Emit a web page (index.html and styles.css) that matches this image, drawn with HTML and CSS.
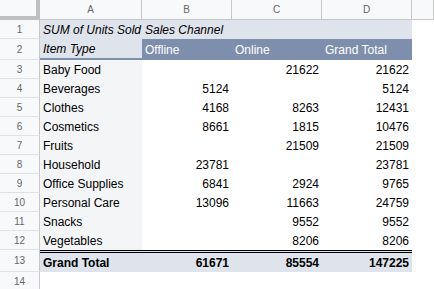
FILE: index.html
```html
<!DOCTYPE html>
<html lang="en">
<head>
    <meta charset="UTF-8">
    <title>Pivot table</title>
    <link rel="stylesheet" href="styles.css">
</head>
<body>
    <div class="sheet">
        <!-- column headers -->
        <div class="corner"></div>
        <div class="col-head">A</div>
        <div class="col-head">B</div>
        <div class="col-head">C</div>
        <div class="col-head">D</div>
        <div class="col-head"></div>

        <!-- row 1 -->
        <div class="row-head">1</div>
        <div class="cell pv-light italic">SUM of Units Sold</div>
        <div class="cell pv-light italic">Sales Channel</div>
        <div class="cell pv-light"></div>
        <div class="cell pv-light"></div>
        <div class="cell"></div>

        <!-- row 2 -->
        <div class="row-head">2</div>
        <div class="cell pv-light italic label-head">Item Type</div>
        <div class="cell pv-dark">Offline</div>
        <div class="cell pv-dark">Online</div>
        <div class="cell pv-dark">Grand Total</div>
        <div class="cell"></div>

        <div class="row-head">3</div>
        <div class="cell label">Baby Food</div>
        <div class="cell num"></div>
        <div class="cell num">21622</div>
        <div class="cell num">21622</div>
        <div class="cell"></div>

        <div class="row-head">4</div>
        <div class="cell label">Beverages</div>
        <div class="cell num">5124</div>
        <div class="cell num"></div>
        <div class="cell num">5124</div>
        <div class="cell"></div>

        <div class="row-head">5</div>
        <div class="cell label">Clothes</div>
        <div class="cell num">4168</div>
        <div class="cell num">8263</div>
        <div class="cell num">12431</div>
        <div class="cell"></div>

        <div class="row-head">6</div>
        <div class="cell label">Cosmetics</div>
        <div class="cell num">8661</div>
        <div class="cell num">1815</div>
        <div class="cell num">10476</div>
        <div class="cell"></div>

        <div class="row-head">7</div>
        <div class="cell label">Fruits</div>
        <div class="cell num"></div>
        <div class="cell num">21509</div>
        <div class="cell num">21509</div>
        <div class="cell"></div>

        <div class="row-head">8</div>
        <div class="cell label">Household</div>
        <div class="cell num">23781</div>
        <div class="cell num"></div>
        <div class="cell num">23781</div>
        <div class="cell"></div>

        <div class="row-head">9</div>
        <div class="cell label">Office Supplies</div>
        <div class="cell num">6841</div>
        <div class="cell num">2924</div>
        <div class="cell num">9765</div>
        <div class="cell"></div>

        <div class="row-head">10</div>
        <div class="cell label">Personal Care</div>
        <div class="cell num">13096</div>
        <div class="cell num">11663</div>
        <div class="cell num">24759</div>
        <div class="cell"></div>

        <div class="row-head">11</div>
        <div class="cell label">Snacks</div>
        <div class="cell num"></div>
        <div class="cell num">9552</div>
        <div class="cell num">9552</div>
        <div class="cell"></div>

        <div class="row-head">12</div>
        <div class="cell label">Vegetables</div>
        <div class="cell num"></div>
        <div class="cell num">8206</div>
        <div class="cell num">8206</div>
        <div class="cell"></div>

        <!-- grand total -->
        <div class="row-head">13</div>
        <div class="cell total">Grand Total</div>
        <div class="cell total num">61671</div>
        <div class="cell total num">85554</div>
        <div class="cell total num">147225</div>
        <div class="cell"></div>

        <div class="row-head">14</div>
        <div class="cell"></div>
        <div class="cell"></div>
        <div class="cell"></div>
        <div class="cell"></div>
        <div class="cell"></div>
    </div>
</body>
</html>
```

FILE: styles.css
```css
html, body {
    margin: 0;
    padding: 0;
    background: #fff;
    overflow: hidden;
}
.sheet {
    display: grid;
    grid-template-columns: 40px 102px 90px 90px 90px 22px;
    grid-template-rows: 20px 19px 21px repeat(10, 19px) 22px 19px;
    font-family: "Liberation Sans", Arial, sans-serif;
    font-size: 12px;
    color: #000;
}
.sheet > div {
    box-sizing: border-box;
    overflow: hidden;
    white-space: nowrap;
}
.corner {
    background: #f8f9fa;
    border-right: 4px solid #c0c0c0;
    border-bottom: 4px solid #c0c0c0;
}
.col-head,
.row-head {
    background: #f8f9fa;
    border-right: 1px solid #c7c7c7;
    color: #666;
    font-size: 10px;
    display: flex;
    align-items: center;
    justify-content: center;
}
.col-head {
    border-bottom: 1px solid #c7c7c7;
}
.row-head {
    border-bottom: 1px solid #e1e1e1;
}
.cell {
    display: flex;
    align-items: center;
    padding: 0 3px;
}
.num {
    justify-content: flex-end;
}
.italic {
    font-style: italic;
}
.pv-light {
    background: #dfe3eb;
}
.pv-dark {
    background: #7e8fae;
    color: #fff;
}
.label-head {
    border-bottom: 2px solid #7e8fae;
}
.label {
    background: #f3f5f7;
}
.total {
    background: #dfe3eb;
    font-weight: bold;
    border-top: 3px double #000;
}
```
